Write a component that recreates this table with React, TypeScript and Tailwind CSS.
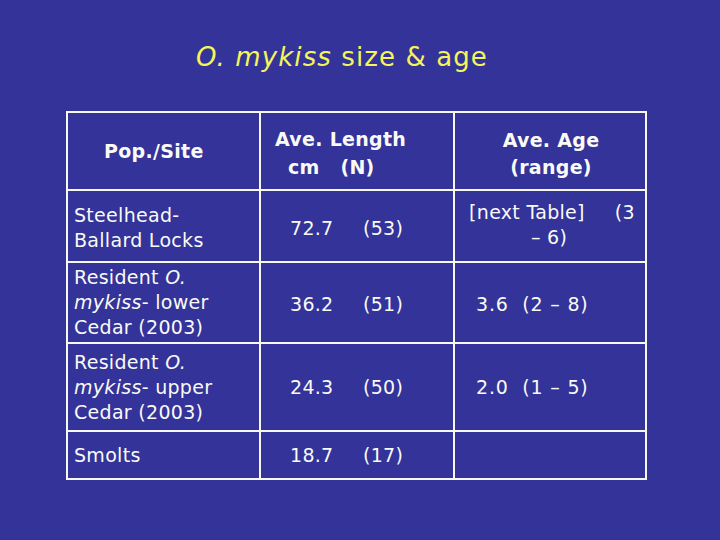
const font = { fontFamily: '"DejaVu Sans", Verdana, sans-serif' };

function Cell({ className = "", children }: { className?: string; children?: React.ReactNode }) {
  return <div className={`bg-[#333399] flex items-center ${className}`}>{children}</div>;
}

function Val({ a, b }: { a: string; b: string }) {
  return (
    <div className="pl-[29px] flex">
      <span className="w-[73px]">{a}</span>
      <span>{b}</span>
    </div>
  );
}

export default function App() {
  return (
    <div className="w-[720px] h-[540px] bg-[#333399] overflow-hidden text-[#fafaf5]" style={font}>
      <h1 className="pl-[196px] pt-[40px] h-[111px] text-[26px] leading-[34px] tracking-[1.1px] text-[#f5f55a]">
        <i>O. mykiss</i> size &amp; age
      </h1>

      <div className="ml-[66px] w-[581px] p-[2px] bg-[#f8f8f2] grid grid-cols-[191px_192px_190px] grid-rows-[76px_70px_79px_86px_46px] gap-[2px] text-[19px] leading-[25px] tracking-[0.3px]">
        {/* header */}
        <Cell className="pl-[36px] font-bold">Pop./Site</Cell>
        <Cell className="pl-[14px] pt-[3px] font-bold leading-[28px]">
          <div>
            <div>Ave. Length</div>
            <div className="pl-[13px] whitespace-pre">cm   (N)</div>
          </div>
        </Cell>
        <Cell className="justify-center font-bold leading-[27px] pr-[4px] pt-[5px]">
          <div className="text-center pl-[6px]">
            <div>Ave. Age</div>
            <div>(range)</div>
          </div>
        </Cell>

        {/* Steelhead */}
        <Cell className="pl-[6px] pt-[4px]">
          <div>
            <div>Steelhead-</div>
            <div>Ballard Locks</div>
          </div>
        </Cell>
        <Cell className="pt-[4px]"><Val a="72.7" b="(53)" /></Cell>
        <Cell className="justify-center pb-[2px]">
          <div className="text-center">
            <div className="flex gap-[30px] pl-[4px]">
              <span>[next Table]</span>
              <span>(3</span>
            </div>
            <div className="pr-[2px]">– 6)</div>
          </div>
        </Cell>

        {/* lower Cedar */}
        <Cell className="pl-[6px]">
          <div>
            <div>Resident <i>O.</i></div>
            <div><i>mykiss</i>- lower</div>
            <div>Cedar (2003)</div>
          </div>
        </Cell>
        <Cell className="pt-[3px]"><Val a="36.2" b="(51)" /></Cell>
        <Cell className="pl-[21px] pt-[3px] whitespace-pre tracking-[0.8px]">3.6  (2 – 8)</Cell>

        {/* upper Cedar */}
        <Cell className="pl-[6px]">
          <div>
            <div>Resident <i>O.</i></div>
            <div><i>mykiss</i>- upper</div>
            <div>Cedar (2003)</div>
          </div>
        </Cell>
        <Cell className="pt-[1px]"><Val a="24.3" b="(50)" /></Cell>
        <Cell className="pl-[21px] pt-[1px] whitespace-pre tracking-[0.8px]">2.0  (1 – 5)</Cell>

        {/* smolts */}
        <Cell className="pl-[6px]">Smolts</Cell>
        <Cell><Val a="18.7" b="(17)" /></Cell>
        <Cell />
      </div>
    </div>
  );
}
